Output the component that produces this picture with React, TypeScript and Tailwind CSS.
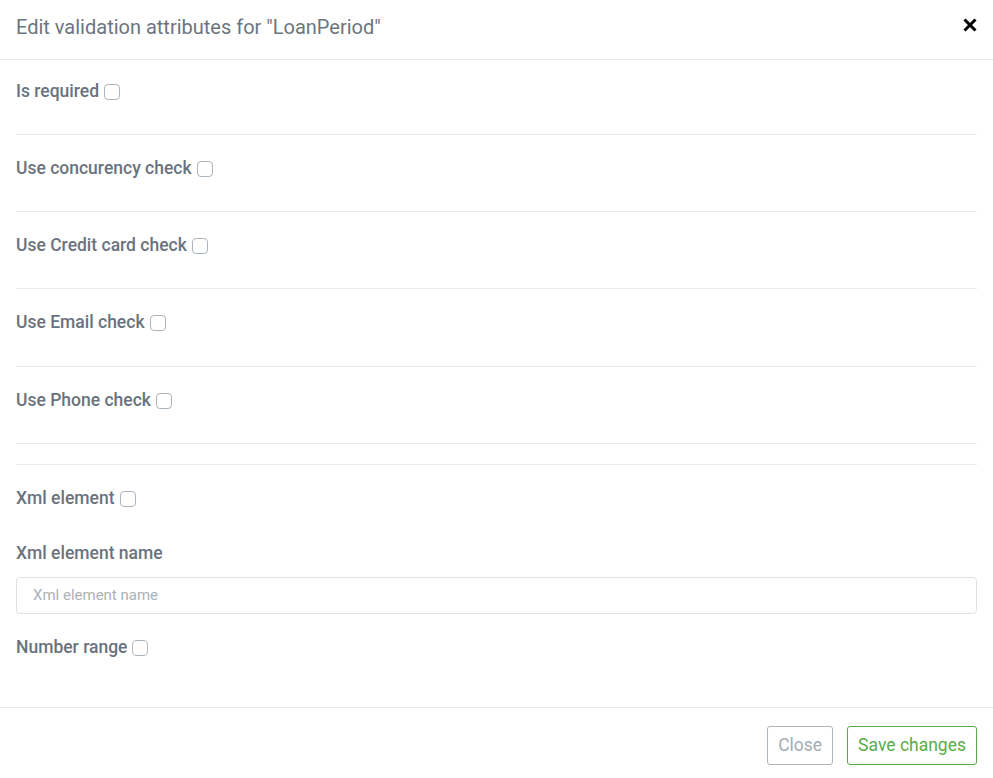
import React from "react";

const font = { fontFamily: "Roboto, 'Noto Sans', sans-serif" };

function Check() {
  return (
    <span className="ml-[5px] inline-block w-4 h-4 rounded-[4px] border border-[#adb5bd] bg-white mt-[2px]" />
  );
}

function Label({ text }: { text: string }) {
  return (
    <div className="flex items-center h-6">
      <span className="text-[17.5px] font-medium text-[#6a737d] leading-6">{text}</span>
      <Check />
    </div>
  );
}

export default function App() {
  const rows = ["Use concurency check", "Use Credit card check", "Use Email check", "Use Phone check"];
  return (
    <div className="w-[993px] h-[778px] bg-white overflow-hidden" style={font}>
      <div className="h-[60px] border-b border-[#e9ecef] flex items-start justify-between px-4 pt-[13px]">
        <div className="text-[20px] leading-7 text-[#6c757d]">Edit validation attributes for "LoanPeriod"</div>
        <svg width="16" height="16" viewBox="0 0 16 16" className="mt-[4px] mr-[-1px]">
          <path d="M2.5 2.5 L13.5 13.5 M13.5 2.5 L2.5 13.5" stroke="#000" strokeWidth="3" />
        </svg>
      </div>
      <div className="px-4">
        <div className="pt-[19px] pb-[31px] border-b border-[#e9ecef]">
          <Label text="Is required" />
        </div>
        {rows.map((r, i) => (
          <div key={r} className={i === 2 ? "pt-[21px] pb-[32px] border-b border-[#e9ecef]" : "pt-[21px] pb-[31px] border-b border-[#e9ecef]"}>
            <Label text={r} />
          </div>
        ))}
        <div className="h-[21px] border-b border-[#e9ecef]" />
        <div className="pt-[21px]">
          <Label text="Xml element" />
        </div>
        <div className="pt-[31px]">
          <div className="h-6 text-[17.5px] font-medium text-[#6a737d] leading-6">Xml element name</div>
        </div>
        <div className="mt-[12px] h-[37px] border border-[#dee2e6] rounded-[4px] flex items-center px-4">
          <span className="text-[15px] text-[#aab1b9]">Xml element name</span>
        </div>
        <div className="pt-[21px]">
          <Label text="Number range" />
        </div>
      </div>
      <div className="mt-[48px] border-t border-[#e9ecef] flex justify-end gap-[14px] px-4 pt-[18px]">
        <div className="h-[39px] px-[10px] border border-[#adb5bd] rounded-[3px] flex items-center text-[17.5px] text-[#a3acb5]">Close</div>
        <div className="h-[39px] px-[10px] border border-[#58ad48] rounded-[3px] flex items-center text-[17.5px] text-[#58ad48]">Save changes</div>
      </div>
    </div>
  );
}
